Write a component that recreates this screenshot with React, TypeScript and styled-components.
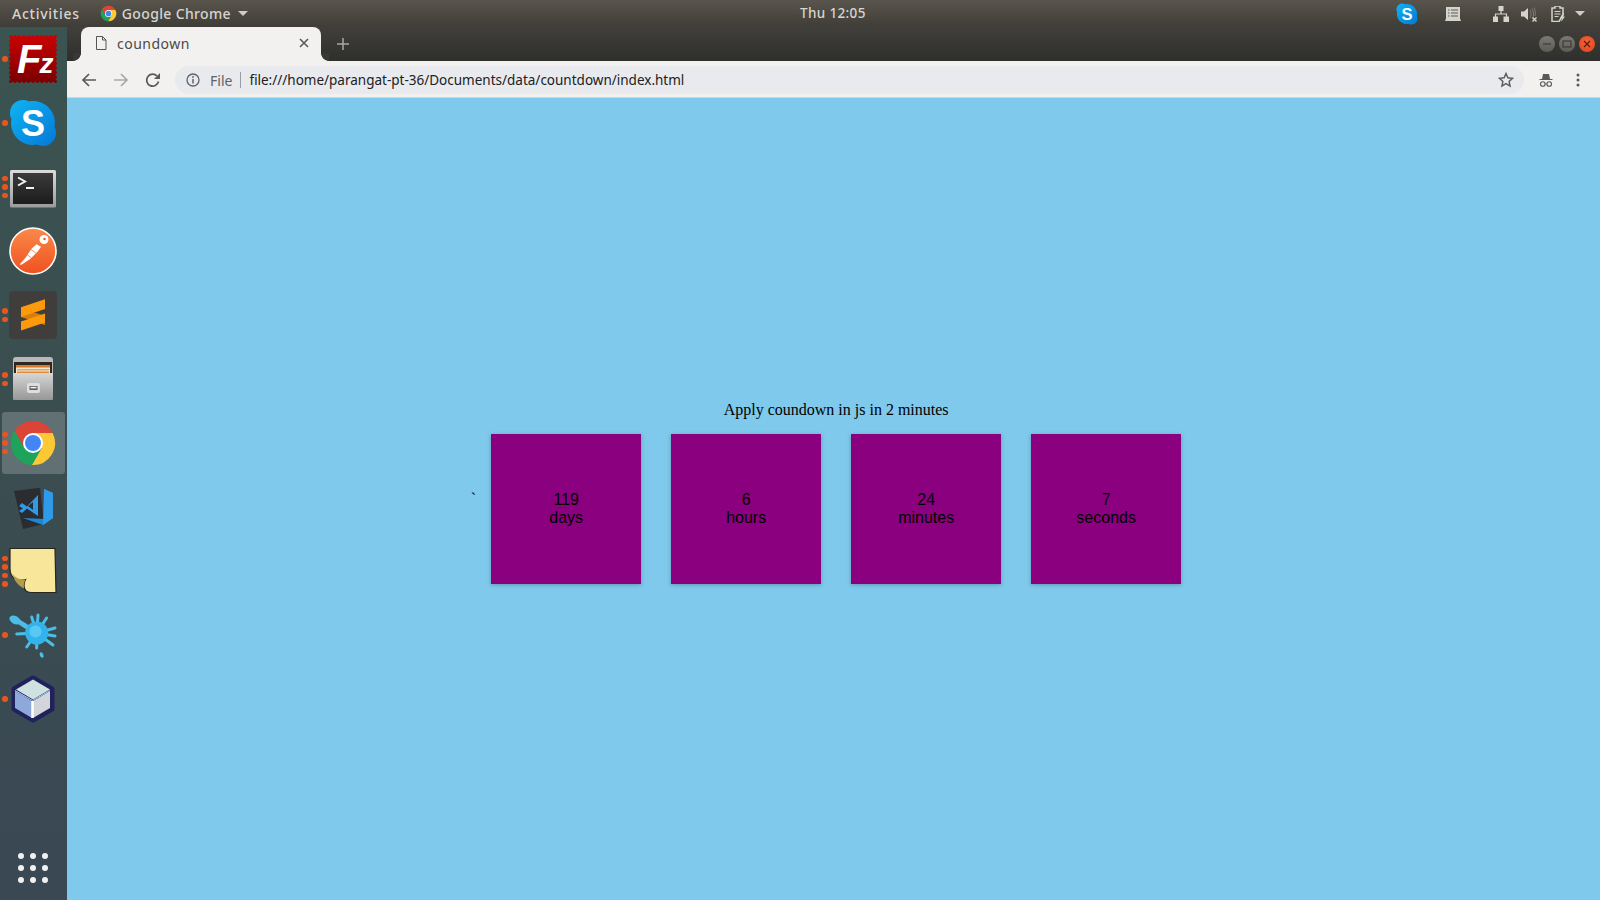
import React from 'react';
import styled, { createGlobalStyle } from 'styled-components';

const Global = createGlobalStyle`
  html, body { margin: 0; padding: 0; height: 100%; overflow: hidden; }
  #root { height: 100%; }
`;

const Desktop = styled.div`
  display: flex;
  flex-direction: column;
  width: 1600px;
  height: 900px;
  overflow: hidden;
  font-family: "Noto Sans", "Open Sans", sans-serif;
`;

const TopBar = styled.header`
  flex: 0 0 27px;
  display: flex;
  align-items: center;
  background: linear-gradient(#59554d, #3f3d37);
  color: #d6d5cf;
  font-size: 14px;
  font-weight: 500;
  letter-spacing: 0.35px;
`;

const BarLeft = styled.div`
  flex: 0 0 800px;
  display: flex;
  align-items: center;
  padding-left: 12px;
  box-sizing: border-box;
`;

const Activities = styled.span`
  letter-spacing: 0.75px;
`;

const AppMenu = styled.div`
  display: flex;
  align-items: center;
  margin-left: 20px;
  gap: 5px;
`;

const MenuCaret = styled.span`
  display: flex;
  margin-left: 2px;
`;

const Clock = styled.div`
  font-size: 13.5px;
  white-space: nowrap;
  padding-bottom: 2px;
`;

const Tray = styled.div`
  margin-left: auto;
  display: flex;
  align-items: center;
  padding-right: 15px;
`;

const TraySlot = styled.span<{ $gap: number }>`
  display: flex;
  margin-left: ${p => p.$gap}px;
`;

const Caret = styled.span`
  width: 0;
  height: 0;
  border-left: 5px solid transparent;
  border-right: 5px solid transparent;
  border-top: 5px solid #cfcec8;
`;

const Body = styled.div`
  flex: 1;
  display: flex;
  min-height: 0;
`;

const Dock = styled.nav`
  flex: 0 0 67px;
  display: flex;
  flex-direction: column;
  background: linear-gradient(#3a5450, #3a4d50 50%, #3a4854);
`;

const DockItem = styled.div<{ $active?: boolean }>`
  position: relative;
  flex: 0 0 64px;
  display: flex;
  align-items: center;
  justify-content: center;
  padding-right: 1px;
  &::before {
    content: '';
    position: absolute;
    left: 2px;
    right: 2px;
    top: 1px;
    bottom: 1px;
    border-radius: 3px;
    background: ${p => (p.$active ? 'rgba(255,255,255,0.2)' : 'transparent')};
  }
  & > svg { position: relative; }
`;

const Pips = styled.div`
  position: absolute;
  left: 2px;
  top: 0;
  bottom: 0;
  display: flex;
  flex-direction: column;
  justify-content: center;
  gap: 3px;
`;

const Pip = styled.i`
  display: block;
  width: 5.5px;
  height: 5.5px;
  border-radius: 50%;
  background: #e9541f;
`;

const AppGrid = styled.div`
  margin-top: auto;
  flex: 0 0 64px;
  display: flex;
  align-items: center;
  justify-content: center;
  padding-right: 1px;
`;

const GridDots = styled.div`
  display: grid;
  grid-template-columns: repeat(3, 6px);
  grid-auto-rows: 6px;
  gap: 6px;
`;

const GridDot = styled.i`
  display: block;
  border-radius: 50%;
  background: #f1f1f1;
`;

const Browser = styled.main`
  flex: 1;
  display: flex;
  flex-direction: column;
  min-width: 0;
`;

const TabStrip = styled.div`
  flex: 0 0 34px;
  display: flex;
  align-items: flex-end;
  padding-left: 14px;
  background: linear-gradient(#403f3b, #2e2e2c);
`;

const Tab = styled.div`
  position: relative;
  width: 240px;
  height: 34px;
  display: flex;
  align-items: center;
  box-sizing: border-box;
  padding: 0 12px 2px 13px;
  background: #f2f1f0;
  border-radius: 8px 8px 0 0;
  color: #4a4a4a;
  font-size: 14px;
  letter-spacing: 0.5px;
  &::before, &::after {
    content: '';
    position: absolute;
    bottom: 0;
    width: 8px;
    height: 8px;
    background: radial-gradient(circle at var(--cx) 0, #383836 7.6px, #f2f1f0 8.2px);
  }
  &::before { left: -8px; --cx: 0; }
  &::after { right: -8px; --cx: 100%; }
`;

const TabTitle = styled.span`
  margin-left: 9px;
  flex: 1;
`;

const NewTab = styled.div`
  margin-left: 16px;
  display: flex;
  align-self: center;
`;

const WindowButtons = styled.div`
  margin-left: auto;
  align-self: center;
  display: flex;
  gap: 4px;
  padding-right: 5px;
`;

const WinButton = styled.span<{ $close?: boolean }>`
  width: 16px;
  height: 16px;
  border-radius: 50%;
  display: flex;
  align-items: center;
  justify-content: center;
  background: ${p =>
    p.$close
      ? 'radial-gradient(circle at 50% 40%, #f2673a, #e2401a)'
      : 'linear-gradient(#7b7a72, #5c5b54)'};
`;

const Toolbar = styled.div`
  flex: 0 0 37px;
  display: flex;
  align-items: center;
  box-sizing: border-box;
  padding: 2px 0 0 14px;
  background: #f2f1f0;
  border-bottom: 1px solid #dcd3cf;
`;

const NavButton = styled.span<{ $gap?: number }>`
  display: flex;
  margin-left: ${p => p.$gap ?? 0}px;
`;

const Omnibox = styled.div`
  margin-left: 14px;
  width: 1349px;
  height: 28px;
  display: flex;
  align-items: center;
  box-sizing: border-box;
  padding: 0 10px 0 11px;
  border-radius: 14px;
  background: #e8eaed;
  font-size: 14px;
`;

const Scheme = styled.span`
  margin-left: 10px;
  color: #5f6368;
`;

const Divider = styled.span`
  width: 1px;
  height: 16px;
  margin: 0 8px 0 8px;
  background: #9aa0a6;
`;

const Url = styled.span`
  flex: 1;
  color: #202124;
  font-size: 13.5px;
  white-space: nowrap;
`;

const Page = styled.section`
  flex: 1;
  display: flex;
  justify-content: center;
  align-items: center;
  background: #7ec9ec;
  color: #000;
  font: 16px "Liberation Serif", "Times New Roman", serif;
`;

const Layout = styled.div`
  display: flex;
  align-items: flex-end;
`;

const Tick = styled.span`
  align-self: center;
`;

const Content = styled.div`
  width: 720px;
  padding-top: 2px;
`;

const Heading = styled.p`
  margin: 0;
  text-align: center;
`;

const Boxes = styled.div`
  display: flex;
`;

const Box = styled.div`
  width: 150px;
  height: 150px;
  margin: 15px;
  display: flex;
  flex-direction: column;
  align-items: center;
  justify-content: center;
  background: #8b007f;
  box-shadow: 0 1px 4px rgba(0, 0, 0, 0.25);
  font-family: "Liberation Sans", Arial, sans-serif;
  line-height: 18px;
`;

const FileZilla = () => (
  <svg width="48" height="48" viewBox="0 0 48 48">
    <defs>
      <linearGradient id="fz" x1="0" y1="0" x2="0" y2="1">
        <stop offset="0" stopColor="#c80202" />
        <stop offset="1" stopColor="#7d0000" />
      </linearGradient>
    </defs>
    <rect x="1.5" y="1.5" width="45" height="45" fill="url(#fz)" stroke="url(#fz)" strokeWidth="3" strokeDasharray="0 4.5" strokeLinecap="round" />
    <rect x="1.5" y="1.5" width="45" height="45" fill="url(#fz)" />
    <text x="8" y="38" fontFamily="Liberation Sans" fontWeight="700" fontStyle="italic" fontSize="40" fill="#fff">
      F<tspan fontSize="28" dx="-2">z</tspan>
    </text>
  </svg>
);

const Skype = ({ size = 48 }: { size?: number }) => (
  <svg width={size} height={size} viewBox="0 0 48 48">
    <defs>
      <linearGradient id={`sk${size}`} x1="0" y1="0" x2="1" y2="1">
        <stop offset="0" stopColor="#0fb4f2" />
        <stop offset="1" stopColor="#0478d6" />
      </linearGradient>
    </defs>
    <path
      fill={`url(#sk${size})`}
      d="M14 1C6.500 1 1 6.800 1 14c0 2.300.6 4.400 1.600 6.300C2.200 21.500 2 22.800 2 24c0 12.200 9.800 22 22 22 1.200 0 2.500-.1 3.700-.4C29.600 46.500 31.700 47 34 47c7.200 0 13-5.800 13-13 0-2.300-.5-4.400-1.600-6.300.4-1.200.6-2.500.6-3.700C46 11.800 36.200 2 24 2c-1.200 0-2.500.1-3.700.5C18.400 1.500 16.300 1 14 1z"
    />
    <text x="24" y="37" textAnchor="middle" fontFamily="Liberation Sans" fontWeight="700" fontSize="36" fill="#fff">S</text>
  </svg>
);

const Terminal = () => (
  <svg width="48" height="48" viewBox="0 0 48 48">
    <defs>
      <linearGradient id="tb" x1="0" y1="0" x2="0" y2="1">
        <stop offset="0" stopColor="#dcdcdc" />
        <stop offset="1" stopColor="#9a9a9a" />
      </linearGradient>
      <linearGradient id="ti" x1="0" y1="0" x2="0" y2="1">
        <stop offset="0" stopColor="#3b3b3b" />
        <stop offset="1" stopColor="#1c1c1c" />
      </linearGradient>
    </defs>
    <rect x="1" y="7" width="46" height="37.500" rx="1.500" fill="url(#tb)" />
    <rect x="4" y="10" width="40" height="31" fill="url(#ti)" />
    <path d="M9 14.500l7 4-7 4" fill="none" stroke="#f2f2f2" strokeWidth="2" />
    <path d="M17 25h8" stroke="#f2f2f2" strokeWidth="2" />
  </svg>
);

const Postman = () => (
  <svg width="48" height="48" viewBox="0 0 48 48">
    <defs>
      <linearGradient id="pm" x1="0" y1="0" x2="0" y2="1">
        <stop offset="0" stopColor="#f98a4a" />
        <stop offset="1" stopColor="#f0501f" />
      </linearGradient>
    </defs>
    <circle cx="24" cy="24" r="23" fill="url(#pm)" stroke="#fff" strokeWidth="1.600" />
    <path d="M10.500 37.500l2 .2 9-6 7-7 3.500-5-4.500-2.500-5 4.500-6 9z" fill="#fff" />
    <circle cx="35" cy="12.500" r="4.500" fill="#fff" />
    <circle cx="35.500" cy="12" r="1.200" fill="#f0501f" />
    <path d="M22 22.500l5.500 4M18 27.500l4.500 3.500" stroke="#f47a42" strokeWidth="0.800" />
  </svg>
);

const Sublime = () => (
  <svg width="48" height="48" viewBox="0 0 48 48">
    <rect width="48" height="48" rx="4" fill="#3f3e3d" />
    <path d="M12 17l24 8v9L12 26z" fill="#d97d08" />
    <path d="M12 16.300l24-8V18l-24 8z" fill="#fd9a0c" />
    <path d="M12 30.600l24-8v9l-24 8z" fill="#fd9a0c" />
  </svg>
);

const Files = () => (
  <svg width="48" height="48" viewBox="0 0 48 48">
    <defs>
      <linearGradient id="fb" x1="0" y1="0" x2="0" y2="1">
        <stop offset="0" stopColor="#d6d6d6" />
        <stop offset="1" stopColor="#979797" />
      </linearGradient>
    </defs>
    <path d="M4 5q0-3 3-3h34q3 0 3 3v14H4z" fill="#b9b9b9" />
    <rect x="5" y="7" width="38" height="12" fill="#2c2826" />
    <rect x="7" y="11" width="34" height="8" fill="#f1e6cf" />
    <rect x="7" y="10" width="34" height="2.500" fill="#d8762c" />
    <rect x="8" y="14" width="32" height="1.500" fill="#e9a55e" />
    <rect x="8" y="16.500" width="32" height="1.500" fill="#e28b3a" />
    <rect x="4" y="18" width="40" height="27" rx="1" fill="url(#fb)" />
    <rect x="18" y="28" width="13" height="10" rx="2" fill="#dedede" />
    <rect x="20.500" y="31" width="8" height="4" rx="0.500" fill="#5a5a5a" />
    <rect x="21.500" y="31.800" width="6" height="1.600" fill="#f2f2f2" />
  </svg>
);

const ChromeLogo = ({ size = 48 }: { size?: number }) => (
  <svg width={size} height={size} viewBox="0 0 48 48">
    <path d="M43.600 14A22 22 0 0 0 5.540 12.030L15.340 29 24 24V14z" fill="#db4437" />
    <path d="M22.860 45.970A22 22 0 0 0 43.600 14H24v10l8.660 5z" fill="#fcc934" />
    <path d="M5.540 12.030A22 22 0 0 0 22.860 45.970L32.660 29 24 24l-8.660 5z" fill="#1da45a" />
    <circle cx="24" cy="24" r="10" fill="#fff" />
    <circle cx="24" cy="24" r="8" fill="#4285f4" />
  </svg>
);

const VSCode = () => (
  <svg width="48" height="48" viewBox="0 0 48 48">
    <path d="M5 8l26-3.300L35 41l-21 5z" fill="#2b2c30" />
    <path d="M35 6l9 4v25l-10 7-20-7 21 1z" fill="#1c87d6" />
    <path d="M35 6l9 4v25l-10 7z" fill="#2f9be8" />
    <path d="M10 23l3-3 5 3.500L29 12v21L18 25.500 13 30l-3-2 4-2.500z" fill="#2f9be8" />
    <path d="M24 19v8l-5-4z" fill="#2b2c30" />
  </svg>
);

const Sticky = () => (
  <svg width="48" height="48" viewBox="0 0 48 48">
    <path d="M1 1.500h45l1 44H22c-5 0-7-3-7-7 0-2 .5-4 1.500-6-5 1.500-10 .5-12.500-2C1.500 28 1 24 1 21z" fill="#f8e69b" stroke="#26261e" strokeWidth="1.200" />
    <path d="M3.500 27c3 4 8 6 13 5.500-1.500 3-2 6-1.500 9-6-3-10-8-11.500-14.500z" fill="#b39c4b" />
  </svg>
);

const splashRays: [number, number][] = [
  [22.7, 6], [29, 4], [37.6, 7], [46, 17], [46, 25], [44, 34], [27.7, 37], [17.7, 36], [7.700, 23],
];

const Splash = () => (
  <svg width="48" height="48" viewBox="0 0 48 48">
    <g stroke="#4dbde6" strokeLinecap="round" strokeWidth="3">
      {splashRays.map(([x, y]) => (
        <path key={`${x}-${y}`} d={`M27.700 22L${x} ${y}`} />
      ))}
      <path d="M7 9L27.700 22" strokeWidth="5" />
    </g>
    <g fill="#4dbde6">
      <ellipse cx="6" cy="9" rx="6" ry="4" transform="rotate(30 6 9)" />
      <ellipse cx="32.600" cy="44" rx="1.800" ry="2.800" transform="rotate(-20 32.600 44)" />
    </g>
    <circle cx="27.700" cy="22" r="11.500" fill="#33b3ec" />
    <circle cx="26.500" cy="20.500" r="6" fill="#58c9f2" />
  </svg>
);

const CubeBox = () => (
  <svg width="48" height="48" viewBox="0 0 48 48">
    <path d="M24 3l19 11v20L24 45 5 34V14z" fill="#20225c" stroke="#20225c" strokeWidth="5" strokeLinejoin="round" />
    <path d="M24 4.500l17 10-17 10-17-10z" fill="#cfe1e0" />
    <path d="M6 16l17 10v17L6 33z" fill="#8fa8dc" />
    <path d="M24 26l17-10v17L24 43z" fill="#d2d6da" />
    <path d="M23.500 26v17" stroke="#fff" strokeWidth="2.500" />
    <path d="M6 15.500l17.500 10 17.500-10" fill="none" stroke="#a8d0ee" strokeWidth="1" />
  </svg>
);

const TrayList = () => (
  <svg width="16" height="16" viewBox="0 0 16 16">
    <path d="M1 1h14v11.500l1 2.500H0l1-2.500z" fill="#d4d3ce" />
    <path d="M3 4h1.500M6 4h7M3 7h1.500M6 7h7M3 10h1.500M6 10h7" stroke="#5c5a53" strokeWidth="1.100" />
  </svg>
);

const TrayNetwork = () => (
  <svg width="16" height="16" viewBox="0 0 16 16">
    <path d="M5.500 0h5v5h-5zM0 10.500h5V16H0zM10.500 10.500H16V16h-5.500z" fill="#d4d3ce" />
    <path d="M8 5v3M2.500 11V8h11v3" fill="none" stroke="#d4d3ce" strokeWidth="1.200" />
  </svg>
);

const TraySound = () => (
  <svg width="16" height="16" viewBox="0 0 16 16">
    <path d="M0 5.500h3L7 2v12l-4-3.500H0z" fill="#d4d3ce" />
    <path d="M9 4c1.500 2 1.500 6 0 8M11 2.500c2 3 2 8 .5 10.500M13 1.500c1.500 2.500 1.500 6 1 8.500" fill="none" stroke="#7d7b74" strokeWidth="1" />
    <path d="M11.500 11.500l4 4M15.500 11.500l-4 4" stroke="#d4d3ce" strokeWidth="1.400" />
  </svg>
);

const TrayBattery = () => (
  <svg width="15" height="16" viewBox="0 0 15 16">
    <path d="M1 2h3V0h5v2h3v7l-4 6.500H1z" fill="none" stroke="#d4d3ce" strokeWidth="1.500" />
    <path d="M3.500 5.500h6M3.500 8h6M3.500 10.500h4" stroke="#d4d3ce" strokeWidth="1.100" />
    <path d="M12 7l-3 5h2l-1 4 4-5.500h-2l1-3.500z" fill="#d4d3ce" />
  </svg>
);

const dockApps: { key: string; pips: number; icon: React.ReactNode; active?: boolean }[] = [
  { key: 'filezilla', pips: 1, icon: <FileZilla /> },
  { key: 'skype', pips: 1, icon: <Skype /> },
  { key: 'terminal', pips: 3, icon: <Terminal /> },
  { key: 'postman', pips: 0, icon: <Postman /> },
  { key: 'sublime', pips: 2, icon: <Sublime /> },
  { key: 'files', pips: 2, icon: <Files /> },
  { key: 'chrome', pips: 3, icon: <ChromeLogo />, active: true },
  { key: 'vscode', pips: 0, icon: <VSCode /> },
  { key: 'sticky', pips: 4, icon: <Sticky /> },
  { key: 'splash', pips: 1, icon: <Splash /> },
  { key: 'cube', pips: 1, icon: <CubeBox /> },
];

const counters = [
  { value: 119, label: 'days' },
  { value: 6, label: 'hours' },
  { value: 24, label: 'minutes' },
  { value: 7, label: 'seconds' },
];

export default function App() {
  return (
    <Desktop>
      <Global />
      <TopBar>
        <BarLeft>
          <Activities>Activities</Activities>
          <AppMenu>
            <ChromeLogo size={17} />
            <span>Google Chrome</span>
            <MenuCaret><Caret /></MenuCaret>
          </AppMenu>
        </BarLeft>
        <Clock>Thu 12:05</Clock>
        <Tray>
          <TraySlot $gap={0}><Skype size={22} /></TraySlot>
          <TraySlot $gap={27}><TrayList /></TraySlot>
          <TraySlot $gap={32}><TrayNetwork /></TraySlot>
          <TraySlot $gap={12}><TraySound /></TraySlot>
          <TraySlot $gap={14}><TrayBattery /></TraySlot>
          <TraySlot $gap={9}><Caret /></TraySlot>
        </Tray>
      </TopBar>
      <Body>
        <Dock>
          {dockApps.map(app => (
            <DockItem key={app.key} $active={app.active}>
              {app.icon}
              <Pips>
                {Array.from({ length: app.pips }, (_, i) => (
                  <Pip key={i} />
                ))}
              </Pips>
            </DockItem>
          ))}
          <AppGrid>
            <GridDots>
              {Array.from({ length: 9 }, (_, i) => (
                <GridDot key={i} />
              ))}
            </GridDots>
          </AppGrid>
        </Dock>
        <Browser>
          <TabStrip>
            <Tab>
              <svg width="14" height="16" viewBox="0 0 14 16">
                <path d="M2.500 1.500h6l3.500 3.500v9.500h-9.500zM8.500 1.500V5H12" fill="none" stroke="#555" strokeWidth="1" />
              </svg>
              <TabTitle>coundown</TabTitle>
              <svg width="10" height="10" viewBox="0 0 10 10">
                <path d="M1 1l8 8M9 1l-8 8" stroke="#555" strokeWidth="1.500" />
              </svg>
            </Tab>
            <NewTab>
              <svg width="12" height="12" viewBox="0 0 12 12">
                <path d="M6 0v12M0 6h12" stroke="#a8a8a5" strokeWidth="1.500" />
              </svg>
            </NewTab>
            <WindowButtons>
              <WinButton>
                <svg width="10" height="10" viewBox="0 0 10 10"><path d="M1 5h8" stroke="#3b3a36" strokeWidth="1.200" /></svg>
              </WinButton>
              <WinButton>
                <svg width="10" height="10" viewBox="0 0 10 10"><rect x="1" y="2" width="8" height="6" fill="none" stroke="#3b3a36" strokeWidth="1.100" /></svg>
              </WinButton>
              <WinButton $close>
                <svg width="10" height="10" viewBox="0 0 10 10"><path d="M2 2l6 6M8 2l-6 6" stroke="#5a1a08" strokeWidth="1.200" /></svg>
              </WinButton>
            </WindowButtons>
          </TabStrip>
          <Toolbar>
            <NavButton>
              <svg width="16" height="16" viewBox="0 0 16 16">
                <path d="M15 8H2M8 2L2 8l6 6" fill="none" stroke="#5a5a5a" strokeWidth="1.700" />
              </svg>
            </NavButton>
            <NavButton $gap={16}>
              <svg width="16" height="16" viewBox="0 0 16 16">
                <path d="M1 8h13M8 2l6 6-6 6" fill="none" stroke="#a9a9a9" strokeWidth="1.700" />
              </svg>
            </NavButton>
            <NavButton $gap={16}>
              <svg width="16" height="16" viewBox="0 0 16 16">
                <path d="M13.500 9.500A6 6 0 1 1 12 4" fill="none" stroke="#5a5a5a" strokeWidth="1.700" />
                <path d="M15 1v6H9z" fill="#5a5a5a" />
              </svg>
            </NavButton>
            <Omnibox>
              <svg width="14" height="14" viewBox="0 0 14 14">
                <circle cx="7" cy="7" r="6" fill="none" stroke="#5f6368" strokeWidth="1.300" />
                <path d="M7 6v4.500" stroke="#5f6368" strokeWidth="1.500" />
                <circle cx="7" cy="4" r="0.900" fill="#5f6368" />
              </svg>
              <Scheme>File</Scheme>
              <Divider />
              <Url>file:///home/parangat-pt-36/Documents/data/countdown/index.html</Url>
              <svg width="16" height="16" viewBox="0 0 16 16">
                <path d="M8 1.500l1.900 4.300 4.600.5-3.400 3.100 1 4.600L8 11.600l-4.100 2.400 1-4.600L1.500 6.300l4.600-.5z" fill="none" stroke="#5a5a5a" strokeWidth="1.400" />
              </svg>
            </Omnibox>
            <NavButton $gap={14}>
              <svg width="16" height="16" viewBox="0 0 16 16">
                <path d="M4 7l1-5h6l1 5z" fill="#5a5a5a" />
                <path d="M1.500 7.500h13" stroke="#5a5a5a" strokeWidth="1" />
                <circle cx="4.800" cy="12" r="2.300" fill="none" stroke="#5a5a5a" strokeWidth="1.100" />
                <circle cx="11.200" cy="12" r="2.300" fill="none" stroke="#5a5a5a" strokeWidth="1.100" />
                <path d="M7.100 12h1.800" stroke="#5a5a5a" strokeWidth="1" />
              </svg>
            </NavButton>
            <NavButton $gap={16}>
              <svg width="16" height="16" viewBox="0 0 16 16">
                <circle cx="8" cy="3" r="1.500" fill="#5a5a5a" />
                <circle cx="8" cy="8" r="1.500" fill="#5a5a5a" />
                <circle cx="8" cy="13" r="1.500" fill="#5a5a5a" />
              </svg>
            </NavButton>
          </Toolbar>
          <Page>
            <Layout>
              <Tick>`</Tick>
              <Content>
                <Heading>Apply coundown in js in 2 minutes</Heading>
                <Boxes>
                  {counters.map(c => (
                    <Box key={c.label}>
                      <span>{c.value}</span>
                      <span>{c.label}</span>
                    </Box>
                  ))}
                </Boxes>
              </Content>
            </Layout>
          </Page>
        </Browser>
      </Body>
    </Desktop>
  );
}
